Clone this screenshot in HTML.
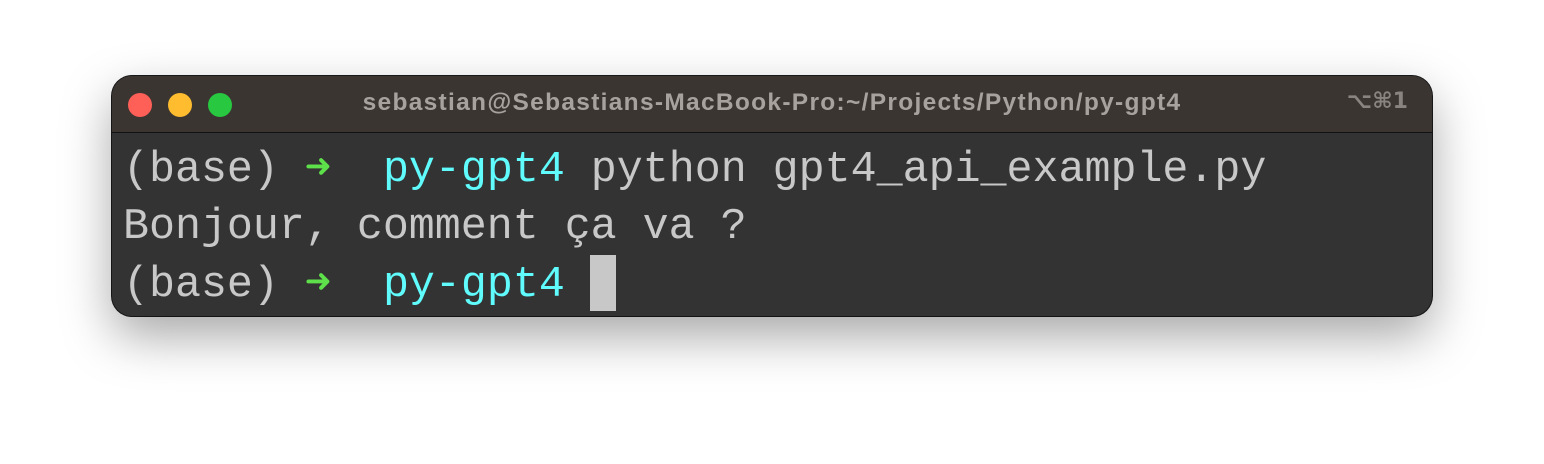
<!DOCTYPE html>
<html><head><style>
body{margin:0;width:1544px;height:464px;background:#fff;overflow:hidden;position:relative}
.win{position:absolute;left:112px;top:76px;width:1320px;height:240px;border-radius:20px;background:#333333;overflow:hidden;box-shadow:0 20px 50px rgba(0,0,0,.35),0 0 0 1px #1a1a1a}
.tb{position:absolute;left:0;top:0;width:100%;height:56px;background:#3b3532;border-bottom:1px solid #111}
.dot{position:absolute;top:17px;width:24px;height:24px;border-radius:50%}
.title{position:absolute;left:0;width:100%;top:13px;text-align:center;font:bold 24.5px "Liberation Sans",sans-serif;letter-spacing:1.3px;color:#a8a29e}
.sc{position:absolute;right:24px;top:13px;font:bold 22px "DejaVu Sans","Liberation Sans",sans-serif;color:#8a8480}
.l{position:absolute;left:11px;font:43.3px/57px "Liberation Mono",monospace;color:#c8c8c8;white-space:pre}
.g{color:#5ee04a}.c{color:#5ffbfd}
.cur{position:absolute;left:478px;top:179px;width:26px;height:56px;background:#c8c8c8}
</style></head><body>
<div class="win">
<div class="tb">
<div class="dot" style="left:16px;background:#fe5f57"></div>
<div class="dot" style="left:56px;background:#febc2e"></div>
<div class="dot" style="left:96px;background:#28c840"></div>
<div class="title">sebastian@Sebastians-MacBook-Pro:~/Projects/Python/py-gpt4</div>
<div class="sc">⌥⌘1</div>
</div>
<div class="l" style="top:66px">(base) <span class="g">➜</span>  <span class="c">py-gpt4</span> python gpt4_api_example.py</div>
<div class="l" style="top:123px">Bonjour, comment ça va ?</div>
<div class="l" style="top:181px">(base) <span class="g">➜</span>  <span class="c">py-gpt4</span> </div>
<div class="cur"></div>
</div>
</body></html>
